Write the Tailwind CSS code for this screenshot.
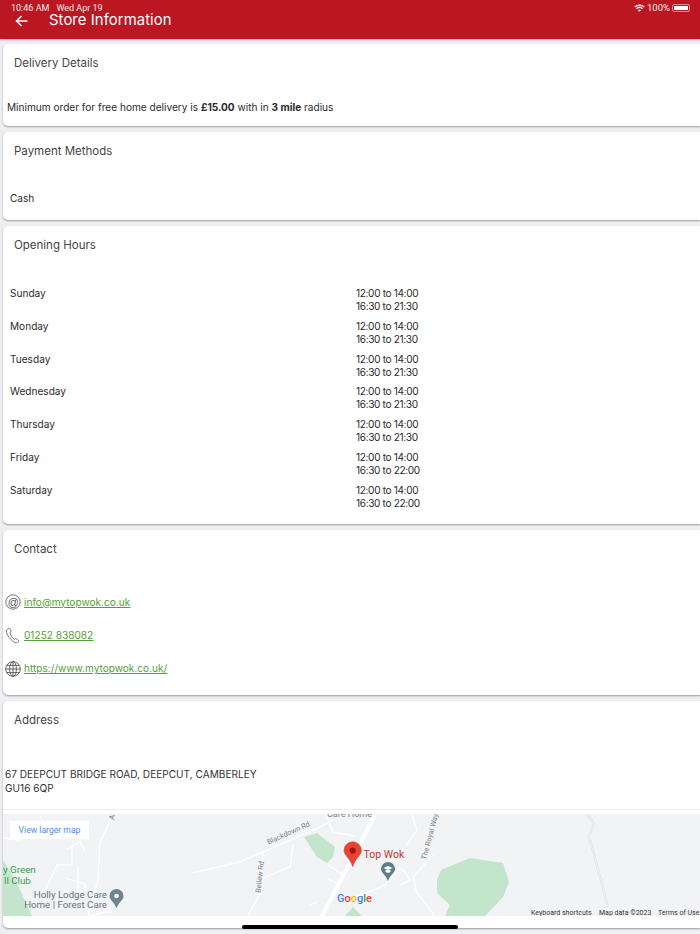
<!DOCTYPE html>
<html lang="en">
<head>
    <meta charset="UTF-8">
    <meta name="viewport" content="width=device-width, initial-scale=1.0">
    <title>Store Information</title>
    <script src="https://cdn.jsdelivr.net/npm/@tailwindcss/browser@4"></script>
</head>
<body class="relative h-[934px] w-[700px] overflow-hidden bg-[#eeeef3] font-['Inter',sans-serif] text-[10.1px] leading-[13px] text-[#2b2b2b]">
    <!-- status bar -->
    <div class="absolute left-[11px] top-[3px] z-10 flex gap-[7px] font-['Roboto',sans-serif] text-[9px] leading-[10px] text-white/90">
        <span>10:46 AM</span><span>Wed Apr 19</span>
    </div>
    <div class="absolute right-[10px] top-[3px] z-10 flex items-center gap-[2px] font-['Roboto',sans-serif] text-[9.5px] leading-[10px] text-white/90">
        <svg width="11" height="8" viewBox="0 0 11 8" fill="none" stroke="white" stroke-width="1.3"><path d="M.8 3a6.8 6.8 0 0 1 9.400 0"/><path d="M2.500 4.700a4.400 4.400 0 0 1 6 0"/><path d="M5.500 7.800 4 6.200a2.200 2.200 0 0 1 3 0z" fill="white" stroke="none"/></svg>
        <span>100%</span>
        <span class="flex h-[8px] w-[18px] rounded-[2px] border border-white/50 p-[1px] pr-0"><span class="w-[14px] bg-white"></span></span>
    </div>

    <header class="flex h-[39px] items-end bg-[#bb1622] pb-[12px] text-white shadow-[0_1px_2px_rgba(0,0,0,0.25)]">
        <svg class="ml-[15px]" width="13" height="12" viewBox="0 0 13 12" fill="none" stroke="white" stroke-width="1.5"><path d="M12.500 6H1.500M6.500 1 1.500 6l5 5"/></svg>
        <h1 class="ml-[21px] text-[14.8px] leading-[14px] tracking-[0.1px]">Store Information</h1>
    </header>

    <main class="flex flex-col gap-[6px] pl-[3px] pt-[5px]">
        <section class="h-[82px] rounded-l-[5px] bg-white shadow-[0_1px_2px_rgba(0,0,0,0.35)]">
            <h2 class="px-[11px] pt-[12px] text-[11.5px] leading-[14px] text-[#444]">Delivery Details</h2>
            <p class="mt-[31px] px-[4px]">Minimum order for free home delivery is <b>£15.00</b> with in <b>3 mile</b> radius</p>
        </section>

        <section class="h-[88px] rounded-l-[5px] bg-white shadow-[0_1px_2px_rgba(0,0,0,0.35)]">
            <h2 class="px-[11px] pt-[12px] text-[11.5px] leading-[14px] text-[#444]">Payment Methods</h2>
            <p class="mt-[34px] px-[7px]">Cash</p>
        </section>

        <section class="h-[298px] rounded-l-[5px] bg-white shadow-[0_1px_2px_rgba(0,0,0,0.35)]">
            <h2 class="px-[11px] pt-[12px] text-[11.5px] leading-[14px] text-[#444]">Opening Hours</h2>
            <div class="mt-[35px] flex flex-col gap-[6.8px] px-[7px]">
                <div class="grid grid-cols-[346px_1fr]"><span>Sunday</span><span class="tracking-[-0.35px]">12:00 to 14:00<br>16:30 to 21:30</span></div>
                <div class="grid grid-cols-[346px_1fr]"><span>Monday</span><span class="tracking-[-0.35px]">12:00 to 14:00<br>16:30 to 21:30</span></div>
                <div class="grid grid-cols-[346px_1fr]"><span>Tuesday</span><span class="tracking-[-0.35px]">12:00 to 14:00<br>16:30 to 21:30</span></div>
                <div class="grid grid-cols-[346px_1fr]"><span>Wednesday</span><span class="tracking-[-0.35px]">12:00 to 14:00<br>16:30 to 21:30</span></div>
                <div class="grid grid-cols-[346px_1fr]"><span>Thursday</span><span class="tracking-[-0.35px]">12:00 to 14:00<br>16:30 to 21:30</span></div>
                <div class="grid grid-cols-[346px_1fr]"><span>Friday</span><span class="tracking-[-0.35px]">12:00 to 14:00<br>16:30 to 22:00</span></div>
                <div class="grid grid-cols-[346px_1fr]"><span>Saturday</span><span class="tracking-[-0.35px]">12:00 to 14:00<br>16:30 to 22:00</span></div>
            </div>
        </section>

        <section class="h-[165px] rounded-l-[5px] bg-white shadow-[0_1px_2px_rgba(0,0,0,0.35)]">
            <h2 class="px-[11px] pt-[12px] text-[11.5px] leading-[14px] text-[#444]">Contact</h2>
            <div class="mt-[38px] flex flex-col gap-[17.3px] pl-[2px] text-[#559f38] underline">
                <a class="flex h-[16px] items-center gap-[3px]">
                    <svg class="shrink-0" width="16" height="16" viewBox="0 0 16 16" fill="none" stroke="#666" stroke-width="0.9"><circle cx="8" cy="8" r="7.200"/><text x="8" y="11.500" text-anchor="middle" font-family="Liberation Sans, sans-serif" font-style="italic" font-size="11" fill="#555" stroke="none">@</text></svg>
                    <span>info@mytopwok.co.uk</span>
                </a>
                <a class="flex h-[16px] items-center gap-[3px]">
                    <svg class="shrink-0" width="16" height="16" viewBox="0 0 16 16" fill="none" stroke="#666" stroke-width="0.9"><path d="M2 2.600 4 1.300c.4-.2.700-.1.900.3l1.200 2.200c.2.400.1.700-.2.900L5 5.400c.3 2.800 2.300 5.700 4.500 7l.9-.7c.3-.2.700-.2.900.1l2.300 1.900c.3.300.3.600 0 .9l-1.200 1c-.5.300-1.300.3-2.200 0C6 13.700 1.800 8.300 1.300 4c-.1-.6.200-1.100.7-1.400z"/></svg>
                    <span>01252 838082</span>
                </a>
                <a class="flex h-[16px] items-center gap-[3px]">
                    <svg class="shrink-0" width="16" height="16" viewBox="0 0 16 16" fill="none" stroke="#555" stroke-width="0.9"><circle cx="8" cy="8" r="7.300"/><ellipse cx="8" cy="8" rx="3.400" ry="7.300"/><path d="M8 .7v14.600M.7 8h14.600M1.700 4.400h12.600M1.700 11.600h12.600"/></svg>
                    <span>https://www.mytopwok.co.uk/</span>
                </a>
            </div>
        </section>

        <section class="h-[227px] rounded-l-[5px] bg-white shadow-[0_1px_2px_rgba(0,0,0,0.35)]">
            <h2 class="px-[11px] pt-[12px] text-[11.5px] leading-[14px] text-[#444]">Address</h2>
            <p class="mt-[40px] px-[2px] leading-[14px] text-[#333]">67 DEEPCUT BRIDGE ROAD, DEEPCUT, CAMBERLEY<br>GU16 6QP</p>
            <div class="mt-[14px] h-[1px] bg-[#ececec]"></div>
            <div class="relative mt-[4px] h-[102px] overflow-hidden bg-[#f1f3f4]">
                <svg class="absolute inset-0" width="697" height="102" viewBox="3 814 697 102" fill="none" font-family="Roboto, sans-serif">
                    <g fill="#c3e5cc">
                        <path d="M304 837 317 833 335 847 333 857 327 863 317 857z"/>
                        <path d="M437 893V880L441 870 470 858 503 863 509 882 503 897 485 916H445L450 905z"/>
                        <path d="M345 916 353 907 362 916z"/>
                        <path d="M3 860 17 883 32 916H3z"/>
                    </g>
                    <g stroke="#fff" stroke-width="1.300">
                        <path d="M192 873 240 862 263 852 320 827 343 815"/>
                        <path d="M263 852 262 890 248 916"/>
                        <path d="M263 878 290 867 293 845"/>
                        <path d="M326 814 333 832 355 836"/>
                        <path d="M412 815 417 830 407 845"/>
                        <path d="M433 855 413 877 417 893 435 916"/>
                        <path d="M356 897 385 885 400 868 405 872 410 880 400 885"/>
                        <path d="M110 820 100 843 98 880 88 916"/>
                        <path d="M72 843V865H57L50 880 45 890"/>
                        <path d="M78 867V895M65 878 85 884V890"/>
                        <path d="M67 849 80 842 85 851M3 838 20 840M40 816 45 826M90 916 105 912H112"/>
                        <path d="M310 905 318 902M328 865 342 874M328 879 340 885"/>
                    </g>
                    <path d="M375 815 322 916" stroke="#fff" stroke-width="4"/>
                    <path d="M587 815 594 823 589 837 595 858 608 907" stroke="#dcdee2" stroke-width="2.200"/>
                    <path d="M587 815 594 823 589 837 595 858 608 907" stroke="#f4f5f6" stroke-width="1"/>

                    <g font-size="7.500" fill="#7b848c">
                        <text transform="translate(283 838) rotate(-24)" x="-16" y="0" font-size="7.300">Blackdown Rd</text>
                        <text transform="translate(262 879) rotate(-84)" x="-14" y="0" font-size="7.300">Bellew Rd</text>
                        <text transform="translate(426 860) rotate(-75)" y="0" font-size="7.300">The Royal Way</text>
                        <text x="327" y="817" font-size="9">Care Home</text>
                        <text transform="translate(114 820) rotate(-80)" y="0">A</text>
                    </g>

                    <text x="3" y="873" font-size="9.800" fill="#34a04f">y Green</text>
                    <text x="4" y="883.500" font-size="9.800" fill="#34a04f">ll Club</text>
                    <text x="107" y="898" font-size="9.700" fill="#66757f" text-anchor="end">Holly Lodge Care</text>
                    <text x="107" y="908" font-size="9.700" fill="#66757f" text-anchor="end">Home | Forest Care</text>

                    <path d="M116.500 889a7 7 0 0 1 7 7c0 4-4 5-7 12-3-7-7-8-7-12a7 7 0 0 1 7-7z" fill="#6d8593"/>
                    <circle cx="116.500" cy="896" r="2.300" fill="#fff"/>
                    <path d="M388 862a7 7 0 0 1 7 7c0 4-4.500 5-7 12-2.500-7-7-8-7-12a7 7 0 0 1 7-7z" fill="#5f7d8c"/>
                    <path d="M383.500 868 388 866l4.500 2-4.500 2zM385.500 870v2l2.500 1 2.500-1v-2" fill="#fff"/>

                    <path d="M352.700 841.700a8.700 8.700 0 0 1 8.700 8.700c0 5-6.300 7.500-8.700 16.300-2.400-8.800-8.700-11.300-8.700-16.300a8.700 8.700 0 0 1 8.700-8.700z" fill="#ea4335" stroke="#d8352a" stroke-width="0.500"/>
                    <circle cx="352.700" cy="850.500" r="3.100" fill="#a5140f"/>
                    <text x="363.500" y="858" font-size="10.500" fill="#c5362c">Top Wok</text>

                    <text x="337" y="902" font-size="11" font-weight="500"><tspan fill="#4285f4">G</tspan><tspan fill="#ea4335">o</tspan><tspan fill="#fbbc05">o</tspan><tspan fill="#4285f4">g</tspan><tspan fill="#34a853">l</tspan><tspan fill="#ea4335">e</tspan></text>

                    <g font-size="7" fill="#333">
                        <text x="531" y="914.500">Keyboard shortcuts</text>
                        <text x="599" y="914.500">Map data ©2023</text>
                        <text x="658" y="914.500">Terms of Use</text>
                    </g>
                </svg>
                <button class="absolute left-[7px] top-[7px] flex h-[18px] w-[79px] items-center justify-center bg-white font-['Roboto',sans-serif] text-[8.600px] text-[#4a8cf0]">View larger map</button>
            </div>
        </section>
    </main>

    <div class="absolute left-[242px] top-[925px] h-[4px] w-[216px] rounded-full bg-black"></div>
</body>
</html>
